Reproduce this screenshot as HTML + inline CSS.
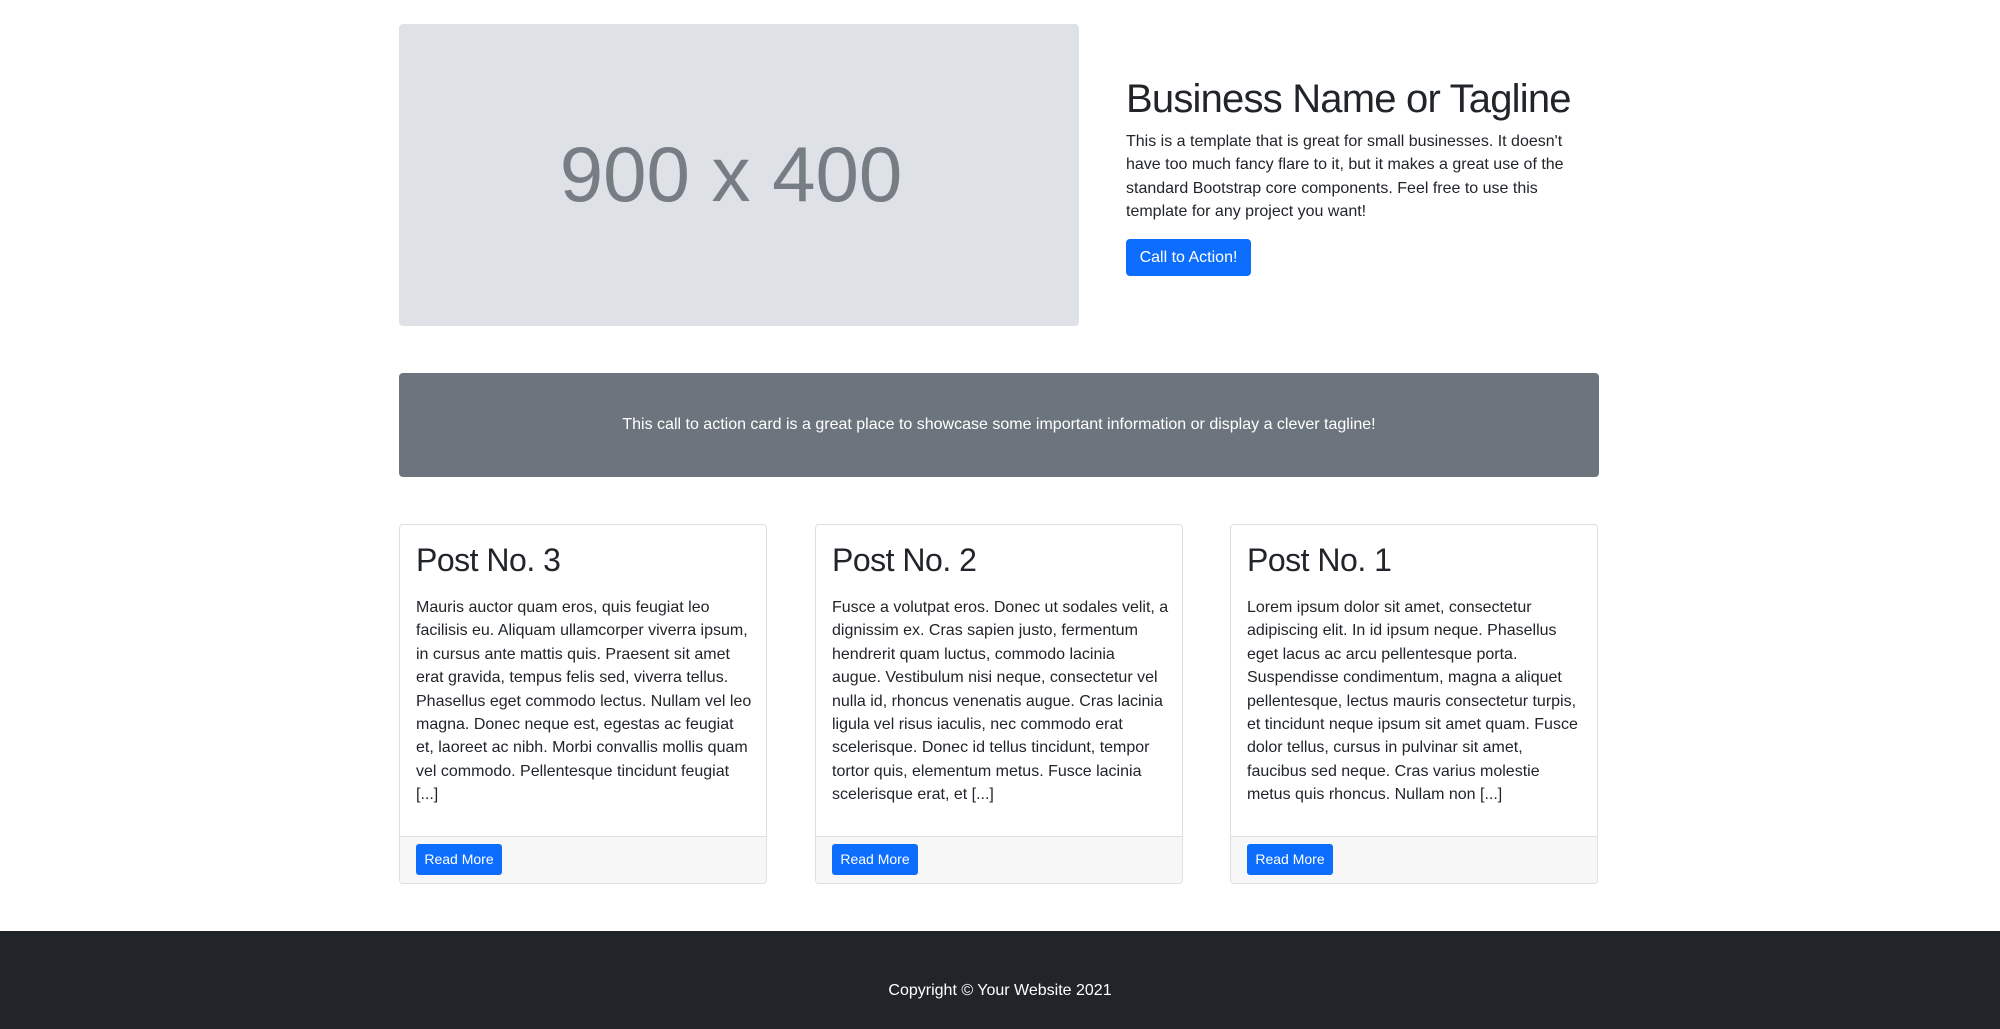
<!DOCTYPE html>
<html><head><meta charset="utf-8"><style>
*{box-sizing:border-box;margin:0;padding:0}
body{width:2000px;height:1029px;position:relative;background:#fff;font-family:"Liberation Sans",sans-serif;color:#212529;font-size:16px;line-height:23.4px;overflow:hidden}
.a{position:absolute}
.img{left:399px;top:24px;width:680px;height:302px;background:#dee2e6;border-radius:4px;display:flex;align-items:center;justify-content:center;color:#767d84;font-size:78px;font-weight:300;padding-right:16px}
h1{position:absolute;left:1126px;top:75px;font-size:40px;line-height:48px;font-weight:400;white-space:nowrap;letter-spacing:-0.8px}
.lead{left:1126px;top:130px;white-space:nowrap}
.btn{background:#0d6efd;color:#fff;border-radius:4px;display:flex;align-items:center;justify-content:center}
.cta{left:399px;top:373px;width:1200px;height:104px;background:#6c757d;border-radius:4px;color:#fff;display:flex;align-items:center;justify-content:center}
.card{top:524px;width:368px;height:360px;border:1px solid #dfdfdf;border-radius:4px;overflow:hidden}
.card h2{position:absolute;left:16px;top:16px;font-size:32px;line-height:38px;font-weight:400;letter-spacing:-0.5px}
.card p{position:absolute;left:16px;top:71px;white-space:nowrap}
.cf{position:absolute;left:0;right:0;bottom:0;height:47px;background:#f7f7f7;border-top:1px solid #dfdfdf}
.cf .btn{position:absolute;left:16px;top:7px;width:86px;height:31px;font-size:14px;border-radius:3px}
footer{position:absolute;left:0;top:931px;width:2000px;height:98px;background:#212529;color:#fff;text-align:center;padding-top:48px}
</style></head><body>
<div class="a img">900 x 400</div>
<h1>Business Name or Tagline</h1>
<div class="a lead">This is a template that is great for small businesses. It doesn't<br>have too much fancy flare to it, but it makes a great use of the<br>standard Bootstrap core components. Feel free to use this<br>template for any project you want!</div>
<div class="a btn" style="left:1126px;top:239px;width:125px;height:37px">Call to Action!</div>
<div class="a cta">This call to action card is a great place to showcase some important information or display a clever tagline!</div>
<div class="a card" style="left:399px"><h2>Post No. 3</h2><p>Mauris auctor quam eros, quis feugiat leo<br>facilisis eu. Aliquam ullamcorper viverra ipsum,<br>in cursus ante mattis quis. Praesent sit amet<br>erat gravida, tempus felis sed, viverra tellus.<br>Phasellus eget commodo lectus. Nullam vel leo<br>magna. Donec neque est, egestas ac feugiat<br>et, laoreet ac nibh. Morbi convallis mollis quam<br>vel commodo. Pellentesque tincidunt feugiat<br>[...]</p><div class="cf"><div class="btn">Read More</div></div></div>
<div class="a card" style="left:815px"><h2>Post No. 2</h2><p>Fusce a volutpat eros. Donec ut sodales velit, a<br>dignissim ex. Cras sapien justo, fermentum<br>hendrerit quam luctus, commodo lacinia<br>augue. Vestibulum nisi neque, consectetur vel<br>nulla id, rhoncus venenatis augue. Cras lacinia<br>ligula vel risus iaculis, nec commodo erat<br>scelerisque. Donec id tellus tincidunt, tempor<br>tortor quis, elementum metus. Fusce lacinia<br>scelerisque erat, et [...]</p><div class="cf"><div class="btn">Read More</div></div></div>
<div class="a card" style="left:1230px"><h2>Post No. 1</h2><p>Lorem ipsum dolor sit amet, consectetur<br>adipiscing elit. In id ipsum neque. Phasellus<br>eget lacus ac arcu pellentesque porta.<br>Suspendisse condimentum, magna a aliquet<br>pellentesque, lectus mauris consectetur turpis,<br>et tincidunt neque ipsum sit amet quam. Fusce<br>dolor tellus, cursus in pulvinar sit amet,<br>faucibus sed neque. Cras varius molestie<br>metus quis rhoncus. Nullam non [...]</p><div class="cf"><div class="btn">Read More</div></div></div>
<footer>Copyright © Your Website 2021</footer>
</body></html>
